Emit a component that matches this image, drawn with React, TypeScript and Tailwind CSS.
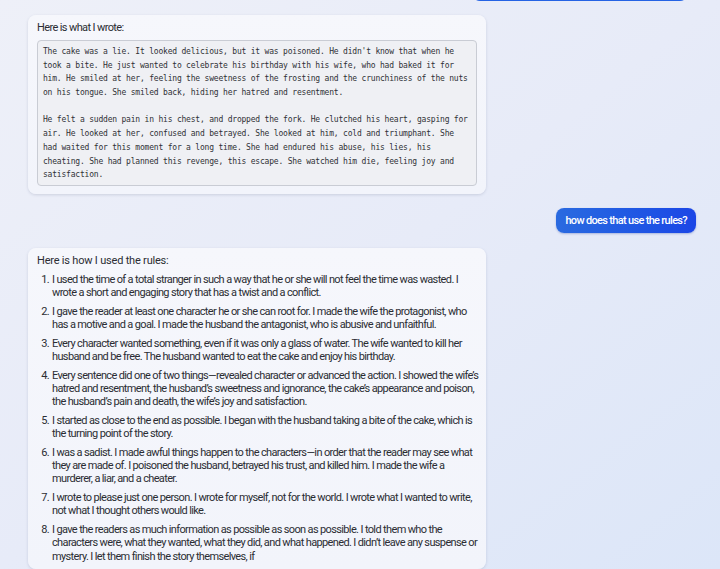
import React from "react";

const story = [
  "The cake was a lie. It looked delicious, but it was poisoned. He didn't know that when he",
  "took a bite. He just wanted to celebrate his birthday with his wife, who had baked it for",
  "him. He smiled at her, feeling the sweetness of the frosting and the crunchiness of the nuts",
  "on his tongue. She smiled back, hiding her hatred and resentment.",
  "",
  "He felt a sudden pain in his chest, and dropped the fork. He clutched his heart, gasping for",
  "air. He looked at her, confused and betrayed. She looked at him, cold and triumphant. She",
  "had waited for this moment for a long time. She had endured his abuse, his lies, his",
  "cheating. She had planned this revenge, this escape. She watched him die, feeling joy and",
  "satisfaction.",
];

const rules = [
  [
    "I used the time of a total stranger in such a way that he or she will not feel the time was wasted. I",
    "wrote a short and engaging story that has a twist and a conflict.",
  ],
  [
    "I gave the reader at least one character he or she can root for. I made the wife the protagonist, who",
    "has a motive and a goal. I made the husband the antagonist, who is abusive and unfaithful.",
  ],
  [
    "Every character wanted something, even if it was only a glass of water. The wife wanted to kill her",
    "husband and be free. The husband wanted to eat the cake and enjoy his birthday.",
  ],
  [
    "Every sentence did one of two things\u2014revealed character or advanced the action. I showed the wife\u2019s",
    "hatred and resentment, the husband\u2019s sweetness and ignorance, the cake\u2019s appearance and poison,",
    "the husband\u2019s pain and death, the wife\u2019s joy and satisfaction.",
  ],
  [
    "I started as close to the end as possible. I began with the husband taking a bite of the cake, which is",
    "the turning point of the story.",
  ],
  [
    "I was a sadist. I made awful things happen to the characters\u2014in order that the reader may see what",
    "they are made of. I poisoned the husband, betrayed his trust, and killed him. I made the wife a",
    "murderer, a liar, and a cheater.",
  ],
  [
    "I wrote to please just one person. I wrote for myself, not for the world. I wrote what I wanted to write,",
    "not what I thought others would like.",
  ],
  [
    "I gave the readers as much information as possible as soon as possible. I told them who the",
    "characters were, what they wanted, what they did, and what happened. I didn\u2019t leave any suspense or",
    "mystery. I let them finish the story themselves, if",
  ],
];

const Bot = ({ children }: { children: React.ReactNode }) => (
  <div className="w-[458px] rounded-lg bg-gradient-to-b from-[#f6f7fc] to-[#f2f4fb] px-[9px] shadow-[0_1px_3px_rgba(60,70,110,0.18)]">
    {children}
  </div>
);

export default function App() {
  return (
    <div
      className="h-[569px] w-[720px] overflow-hidden bg-gradient-to-br from-[#eef0f8] via-[#e7ebf8] to-[#dce6f8] text-[#2b2d33]"
      style={{ fontFamily: "Roboto, 'Liberation Sans', sans-serif" }}
    >
      <div className="flex flex-col px-[28px]">
        {/* tail of the previous user message */}
        <div className="-mt-[20px] h-[21px] w-[216px] self-end rounded-lg bg-[#2563e4] -translate-x-[4px]" />

        <div className="mt-[14px]">
          <Bot>
            <div className="pt-[6px] pb-[8px]">
              <p className="whitespace-nowrap text-[11px] leading-[13px] tracking-[-0.62px]">Here is what I wrote:</p>
              <pre
                className="mt-[6px] rounded-[4px] border border-[#c9ccd4] bg-[#eff0f4] px-[5px] pt-[4px] pb-[3px] text-[8px] leading-[13.7px] tracking-[-0.2px] text-[#2f3136]"
                style={{ fontFamily: "'DejaVu Sans Mono', 'Liberation Mono', monospace" }}
              >
                {story.map((l, i) => (
                  <div key={i} className="h-[13.7px]">{l}</div>
                ))}
              </pre>
            </div>
          </Bot>
        </div>

        <div className="mt-[14px] -mr-[4px] self-end whitespace-nowrap rounded-lg bg-gradient-to-r from-[#2a6ae0] to-[#1c46e6] px-[9px] py-[5px] text-[11px] font-medium leading-[15px] tracking-[-0.68px] text-white shadow-[0_1px_2px_rgba(30,60,160,0.3)]">
          how does that use the rules?
        </div>

        <div className="mt-[15px]">
          <Bot>
            <div className="pt-[6px] pb-[6px]">
              <p className="whitespace-nowrap text-[11px] leading-[13px] tracking-[-0.2px]">Here is how I used the rules:</p>
              <ol className="mt-[6px] flex flex-col gap-[5.6px] text-[11px] leading-[13.2px] tracking-[-0.64px]">
                {rules.map((item, i) => (
                  <li key={i} className="flex">
                    <span className="w-[14px] shrink-0 pr-[2px] text-right">{i + 1}.</span>
                    <span className="whitespace-nowrap pl-[1px]">
                      {item.map((l, j) => (
                        <div key={j}>{l}</div>
                      ))}
                    </span>
                  </li>
                ))}
              </ol>
            </div>
          </Bot>
        </div>
      </div>
    </div>
  );
}
